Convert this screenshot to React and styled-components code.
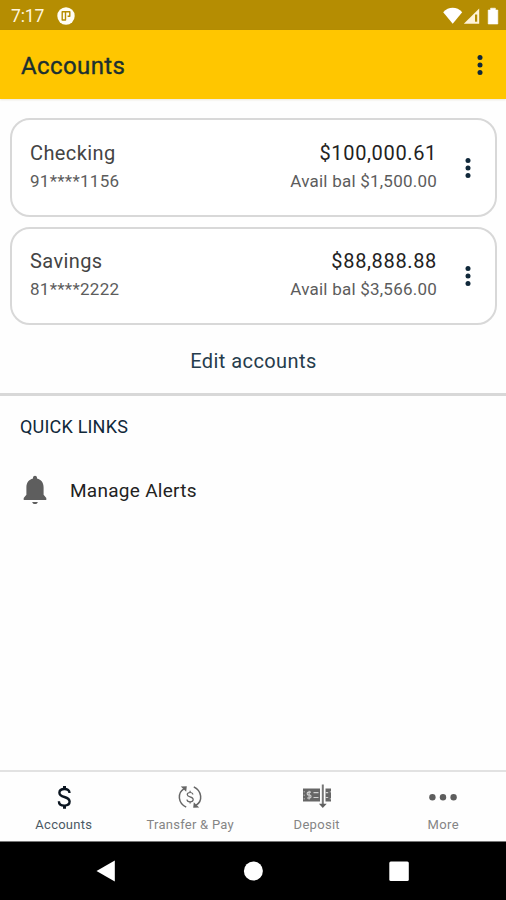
import React from 'react';
import styled, { createGlobalStyle, ThemeProvider } from 'styled-components';

const theme = {
  brand: '#ffc600',
  brandDark: '#b58d02',
  navy: '#10283a',
  ink: '#222222',
  muted: '#5c5c5c',
  line: '#d8d8d8'
};

const GlobalStyle = createGlobalStyle`
  *, *::before, *::after {
    box-sizing: border-box;
  }

  body {
    margin: 0;
    background: #fefefe;
    font-family: Roboto, 'Liberation Sans', sans-serif;
  }
`;

const Screen = styled.div`
  display: flex;
  flex-direction: column;
  width: 506px;
  height: 900px;
  overflow: hidden;
  background: #fefefe;
`;

const StatusBar = styled.div`
  display: flex;
  align-items: center;
  flex: none;
  height: 30px;
  padding: 2px 7px 0 11px;
  background: ${({ theme }) => theme.brandDark};
  color: #fff6df;

  svg {
    display: block;
  }
`;

const Clock = styled.span`
  width: 46px;
  font-size: 17.5px;
  line-height: 20px;
  letter-spacing: -0.1px;
`;

const StatusIcons = styled.div`
  margin-left: auto;
`;

const AppBar = styled.header`
  display: flex;
  align-items: center;
  justify-content: space-between;
  flex: none;
  height: 69px;
  padding: 0 23px 0 21px;
  background: ${({ theme }) => theme.brand};
  box-shadow: 0 1px 2px rgba(120, 100, 30, 0.15);
`;

const Title = styled.h1`
  margin: 3px 0 0;
  color: #1c3030;
  font-size: 24px;
  font-weight: 400;
  line-height: 30px;
  letter-spacing: 0.4px;
  -webkit-text-stroke: 0.35px currentColor;
`;

const MenuButton = styled.button`
  display: flex;
  padding: 0;
  border: 0;
  background: none;
  color: ${({ theme }) => theme.navy};

  svg {
    display: block;
  }
`;

const AccountList = styled.section`
  display: flex;
  flex-direction: column;
  gap: 10px;
  flex: none;
  padding: 19px 9px 0 10px;
`;

const AccountCard = styled.article`
  display: flex;
  align-items: center;
  height: 98.5px;
  padding: 1px 24px 0 18px;
  border: 2px solid ${({ theme }) => theme.line};
  border-radius: 20px;
  background: #ffffff;
`;

const CardColumn = styled.div`
  display: flex;
  flex-direction: column;
  align-items: ${({ end }) => (end ? 'flex-end' : 'flex-start')};
  margin-left: ${({ end }) => (end ? 'auto' : '0')};
  margin-right: ${({ end }) => (end ? '28px' : '0')};
  padding-bottom: 2px;
`;

const CardTitle = styled.div`
  color: ${({ strong, theme }) => (strong ? theme.ink : '#444444')};
  font-size: 20px;
  line-height: 29px;
  letter-spacing: ${({ spacing }) => spacing};
`;

const CardDetail = styled.div`
  color: ${({ theme }) => theme.muted};
  font-size: 17px;
  line-height: 27px;
  letter-spacing: ${({ spacing }) => spacing};
`;

const EditLink = styled.button`
  flex: none;
  height: 71px;
  padding: 3px 0 0 1px;
  border: 0;
  border-bottom: 3px solid ${({ theme }) => theme.line};
  background: none;
  color: #263c4c;
  font-family: inherit;
  font-size: 20px;
  line-height: 24px;
  letter-spacing: 0.42px;
`;

const QuickLinks = styled.section`
  flex: 1;
  padding: 19px 20px 0;
`;

const SectionTitle = styled.h2`
  margin: 0;
  color: ${({ theme }) => theme.navy};
  font-size: 18px;
  font-weight: 400;
  line-height: 24px;
  letter-spacing: 0.2px;
`;

const LinkRow = styled.div`
  display: flex;
  align-items: center;
  gap: 21px;
  margin-top: 36px;
  padding-left: 1px;
  color: ${({ theme }) => theme.ink};
  font-size: 19px;
  line-height: 32px;
  letter-spacing: 0.28px;

  svg {
    margin-top: -2px;
  }
`;

const TabBar = styled.nav`
  display: grid;
  grid-template-columns: repeat(4, 1fr);
  flex: none;
  height: 72px;
  border-top: 2px solid #e2e2e2;
  border-bottom: 1px solid #777777;
  background: #fefefe;
`;

const Tab = styled.div`
  display: flex;
  flex-direction: column;
  align-items: center;
  padding: 12px 0 0 1px;
  color: ${({ active, theme }) => (active ? theme.navy : '#666666')};
  font-size: 13px;
  line-height: 18px;
  letter-spacing: ${({ spacing }) => spacing};

  svg {
    display: block;
    margin-bottom: 6px;
  }
`;

const TabLabel = styled.span`
  color: ${({ active }) => (active ? '#4b5964' : '#858585')};
`;

const SystemNav = styled.div`
  display: flex;
  align-items: center;
  justify-content: space-between;
  flex: none;
  height: 58px;
  padding: 0 95px;
  background: #000000;
`;

const AppBadgeIcon = () => (
  <svg width="18" height="18" viewBox="0 0 18 18">
    <circle cx="9" cy="9" r="8.7" fill="#fffdf5" />
    <path
      d="M5.200 4.800h3.300v8.200h-3.300zM8.500 4.800h4.300v4.400H10.600"
      fill="none"
      stroke={theme.brandDark}
      strokeWidth="1.400"
      strokeLinejoin="round"
    />
  </svg>
);

const SignalIcons = () => (
  <svg width="56" height="18" viewBox="0 0 56 18">
    <path d="M0.2 5.2C5.4-.7 14-.7 19.2 5.2L9.7 16.8z" fill="#fff" />
    <path d="M36.2 1.6v15.2H20.8z" fill="#fff3d8" />
    <path d="M32 7.500h2.200v7.200H32z" fill={theme.brandDark} />
    <path d="M45.2 3h2.4V1.2h4.8V3h2.4v14h-9.6z" fill="#fff" strokeLinejoin="round" stroke="#fff" strokeWidth=".6" />
  </svg>
);

const KebabIcon = () => (
  <svg width="6" height="22" viewBox="0 0 6 22" fill="currentColor">
    <circle cx="3" cy="3.500" r="2.500" />
    <circle cx="3" cy="11" r="2.500" />
    <circle cx="3" cy="18.500" r="2.500" />
  </svg>
);

const BellIcon = () => (
  <svg width="28" height="30" viewBox="0 0 28 30" fill="#5e5e5e">
    <path d="M14 29c1.600 0 2.600-.9 2.800-2.100h-5.600C11.400 28.100 12.400 29 14 29z" />
    <path d="M22.600 19.800v-7.400c0-4.600-2.400-7.900-6.600-8.900V2.700c0-1.200-.9-2-2-2s-2 .8-2 2v.8c-4.200 1-6.600 4.300-6.600 8.900v7.400L2.700 23v2h22.600v-2z" />
  </svg>
);

const DollarIcon = () => (
  <svg width="28" height="26" viewBox="0 0 28 26" fill="none" stroke="#0b1520" strokeWidth="2.400">
    <path d="M19.500 9C19.500 6.500 17.500 5 14.500 5 11.300 5 9.400 6.500 9.400 8.700c0 2.500 2.200 3.400 5 4.300 3.300 1 5.200 2 5.200 4.600 0 2.500-2.100 4-5.200 4-3.400 0-5.500-1.600-5.500-4.400" />
    <path d="M14.500 2v3.500M14.500 21.200v3.500" strokeWidth="3" />
  </svg>
);

const TransferIcon = () => (
  <svg width="28" height="26" viewBox="0 0 28 26" fill="none" stroke="currentColor" strokeWidth="1.500">
    <path d="M10.200 23.200C1.800 19 1.200 9 7.800 4.800M17.800 2.800c8.400 4.200 9 14.200 2.400 18.400" />
    <path d="M4.800 2.500l6-.3-.6 5.500zM23.200 23.500l-6 .3.6-5.500z" fill="currentColor" stroke="none" />
    <path
      d="M16.900 10.500c-.2-1.300-1.300-2-2.800-2-1.800 0-2.900.8-2.900 2.100 0 1.400 1.300 1.800 2.900 2.300 1.900.6 3.100 1.100 3.100 2.600s-1.300 2.300-3.100 2.300c-2 0-3.100-.9-3.100-2.400M14.100 6.700v1.800M14.100 17.800v1.800"
      strokeWidth="1.200"
    />
  </svg>
);

const DepositIcon = () => (
  <svg width="28" height="26" viewBox="0 0 28 26">
    <path d="M0 4.500h17v13H0zM22.500 4.500H28v13h-5.500z" fill="#666666" />
    <path
      d="M8 8.200H5.500Q4.200 8.200 4.200 9.600T5.500 11h1.200Q8 11 8 12.500T6.700 14H4M6.100 6.800v8.600M10.500 8.700h5M10.500 13.500h5M22.500 8.700h2.700M22.500 13.500h2.700"
      fill="none"
      stroke="#d0d0d0"
      strokeWidth="1.200"
    />
    <path d="M1.200 7v1.500M1.200 10.500V12M1.200 14v1.500M27.300 7v1.500M27.300 14v1.500" stroke="#b5b5b5" strokeWidth="1" />
    <path d="M19.800 .5v20" stroke="#777777" strokeWidth="2" />
    <path d="M15.900 19.800h7.800l-3.900 4.300z" fill="#606060" />
  </svg>
);

const MoreIcon = () => (
  <svg width="28" height="26" viewBox="0 0 28 26" fill="#5d5d5d">
    <circle cx="3.400" cy="13.200" r="3.200" />
    <circle cx="14" cy="13.200" r="3.200" />
    <circle cx="24.600" cy="13.200" r="3.200" />
  </svg>
);

const BackIcon = () => (
  <svg width="22" height="22" viewBox="0 0 22 22" fill="#fff">
    <path d="M19.800.5v21L1.500 11z" />
  </svg>
);

const HomeIcon = () => (
  <svg width="22" height="20" viewBox="0 0 22 20" fill="#fff">
    <circle cx="12.400" cy="10" r="9.500" />
  </svg>
);

const RecentsIcon = () => (
  <svg width="24" height="22" viewBox="0 0 24 22" fill="#fff">
    <rect x="2.300" y="1.500" width="19.500" height="19.500" rx="1.500" />
  </svg>
);

const accounts = [
  {
    name: 'Checking',
    number: '91****1156',
    balance: '$100,000.61',
    available: 'Avail bal $1,500.00'
  },
  {
    name: 'Savings',
    number: '81****2222',
    balance: '$88,888.88',
    available: 'Avail bal $3,566.00'
  }
];

const tabs = [
  { label: 'Accounts', Icon: DollarIcon, active: true, spacing: '0.25px' },
  { label: 'Transfer & Pay', Icon: TransferIcon, spacing: '0.25px' },
  { label: 'Deposit', Icon: DepositIcon, spacing: '0.3px' },
  { label: 'More', Icon: MoreIcon, spacing: '0.45px' }
];

const Account = ({ name, number, balance, available }) => (
  <AccountCard>
    <CardColumn>
      <CardTitle spacing="0.4px">{name}</CardTitle>
      <CardDetail spacing="0.27px">{number}</CardDetail>
    </CardColumn>
    <CardColumn end>
      <CardTitle strong spacing="0.65px">
        {balance}
      </CardTitle>
      <CardDetail spacing="0.23px">{available}</CardDetail>
    </CardColumn>
    <MenuButton aria-label={`${name} options`}>
      <KebabIcon />
    </MenuButton>
  </AccountCard>
);

const App = () => (
  <ThemeProvider theme={theme}>
    <GlobalStyle />
    <Screen>
      <StatusBar>
        <Clock>7:17</Clock>
        <AppBadgeIcon />
        <StatusIcons>
          <SignalIcons />
        </StatusIcons>
      </StatusBar>
      <AppBar>
        <Title>Accounts</Title>
        <MenuButton aria-label="Menu">
          <KebabIcon />
        </MenuButton>
      </AppBar>
      <AccountList>
        {accounts.map(account => (
          <Account key={account.name} {...account} />
        ))}
      </AccountList>
      <EditLink>Edit accounts</EditLink>
      <QuickLinks>
        <SectionTitle>QUICK LINKS</SectionTitle>
        <LinkRow>
          <BellIcon />
          Manage Alerts
        </LinkRow>
      </QuickLinks>
      <TabBar>
        {tabs.map(({ label, Icon, active, spacing }) => (
          <Tab key={label} active={active} spacing={spacing}>
            <Icon />
            <TabLabel active={active}>{label}</TabLabel>
          </Tab>
        ))}
      </TabBar>
      <SystemNav>
        <BackIcon />
        <HomeIcon />
        <RecentsIcon />
      </SystemNav>
    </Screen>
  </ThemeProvider>
);

export default App;
